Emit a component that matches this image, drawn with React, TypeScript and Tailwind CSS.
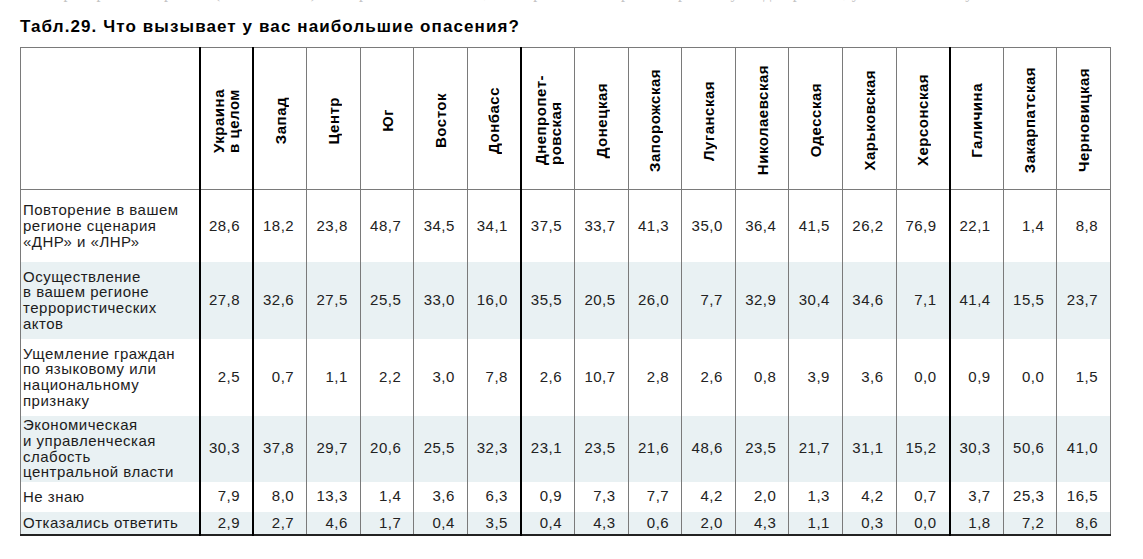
const regions = [
  ["Украина", "в целом"],
  ["Запад"],
  ["Центр"],
  ["Юг"],
  ["Восток"],
  ["Донбасс"],
  ["Днепропет-", "ровская"],
  ["Донецкая"],
  ["Запорожская"],
  ["Луганская"],
  ["Николаевская"],
  ["Одесская"],
  ["Харьковская"],
  ["Херсонская"],
  ["Галичина"],
  ["Закарпатская"],
  ["Черновицкая"],
];

// columns that get the heavy black rule on their left side
const thick = [0, 1, 6, 14];

const rows = [
  {
    label: ["Повторение в вашем", "регионе сценария", "«ДНР» и «ЛНР»"],
    h: "h-[72px]",
    values: "28,6 18,2 23,8 48,7 34,5 34,1 37,5 33,7 41,3 35,0 36,4 41,5 26,2 76,9 22,1 1,4 8,8",
  },
  {
    label: ["Осуществление", "в вашем регионе", "террористических", "актов"],
    h: "h-[77px]",
    values: "27,8 32,6 27,5 25,5 33,0 16,0 35,5 20,5 26,0 7,7 32,9 30,4 34,6 7,1 41,4 15,5 23,7",
  },
  {
    label: ["Ущемление граждан", "по языковому или", "национальному", "признаку"],
    h: "h-[77px]",
    values: "2,5 0,7 1,1 2,2 3,0 7,8 2,6 10,7 2,8 2,6 0,8 3,9 3,6 0,0 0,9 0,0 1,5",
  },
  {
    label: ["Экономическая", "и управленческая", "слабость", "центральной власти"],
    h: "h-[66px]",
    values: "30,3 37,8 29,7 20,6 25,5 32,3 23,1 23,5 21,6 48,6 23,5 21,7 31,1 15,2 30,3 50,6 41,0",
  },
  {
    label: ["Не знаю"],
    h: "h-[30px]",
    values: "7,9 8,0 13,3 1,4 3,6 6,3 0,9 7,3 7,7 4,2 2,0 1,3 4,2 0,7 3,7 25,3 16,5",
  },
  {
    label: ["Отказались ответить"],
    h: "h-[23px]",
    values: "2,9 2,7 4,6 1,7 0,4 3,5 0,4 4,3 0,6 2,0 4,3 1,1 0,3 0,0 1,8 7,2 8,6",
  },
];

export default function App() {
  return (
    <div className="w-[1143px] h-[559px] bg-white px-[20px] overflow-hidden font-['Liberation_Sans',Arial,sans-serif] text-[#1c1c1c]">
      {/* tail of the previous paragraph, cut by the page edge */}
      <div className="h-[4px] overflow-hidden">
        <p className="-mt-[16px] text-[16px] leading-[18px] whitespace-nowrap text-[#c4c4c4] font-['Liberation_Serif',serif] tracking-[0.4px]">
          в который раз повторяется (как в 2014-м) — опросы показывают, что в регионах Украины тревоги у людей разные, у всех по-своему
        </p>
      </div>

      <h1 className="mt-[13px] text-[17px] leading-[20px] font-bold tracking-[1.1px] text-black">
        Табл.29. Что вызывает у вас наибольшие опасения?
      </h1>

      <table className="mt-[10px] w-[1091px] table-fixed border-collapse border border-[#7a7a7a] border-b-2 border-b-[#222] text-[15px] tracking-[0.5px]">
        <colgroup>
          <col className="w-[179px]" />
          {regions.map((_, i) => (
            <col key={i} />
          ))}
        </colgroup>
        <thead>
          <tr className="h-[142px]">
            <th className="border border-[#7a7a7a]" />
            {regions.map((r, i) => (
              <th
                key={i}
                className={
                  "border border-[#7a7a7a] p-0 align-middle " +
                  (thick.includes(i) ? "border-l-2 border-l-black" : "")
                }
              >
                <div className="flex items-center justify-center pt-[4px]">
                  <span className="[writing-mode:vertical-rl] rotate-180 text-left font-bold leading-[15px] text-black whitespace-nowrap">
                    {r.map((line, j) => (
                      <span key={j} className="block">
                        {line}
                      </span>
                    ))}
                  </span>
                </div>
              </th>
            ))}
          </tr>
        </thead>
        <tbody>
          {rows.map((row, ri) => (
            <tr key={ri} className={row.h + (ri % 2 === 1 ? " bg-[#e9f1f3]" : " bg-white")}>
              <td className="border-r border-[#7a7a7a] pl-[2px] align-middle leading-[15.7px] whitespace-nowrap">
                {row.label.map((line, j) => (
                  <div key={j}>{line}</div>
                ))}
              </td>
              {row.values.split(" ").map((v, i) => (
                <td
                  key={i}
                  className={
                    "border-x border-[#7a7a7a] pr-[12px] text-right align-middle text-[#222] " +
                    (thick.includes(i) ? "border-l-2 border-l-black" : "")
                  }
                >
                  {v}
                </td>
              ))}
            </tr>
          ))}
        </tbody>
      </table>
    </div>
  );
}
